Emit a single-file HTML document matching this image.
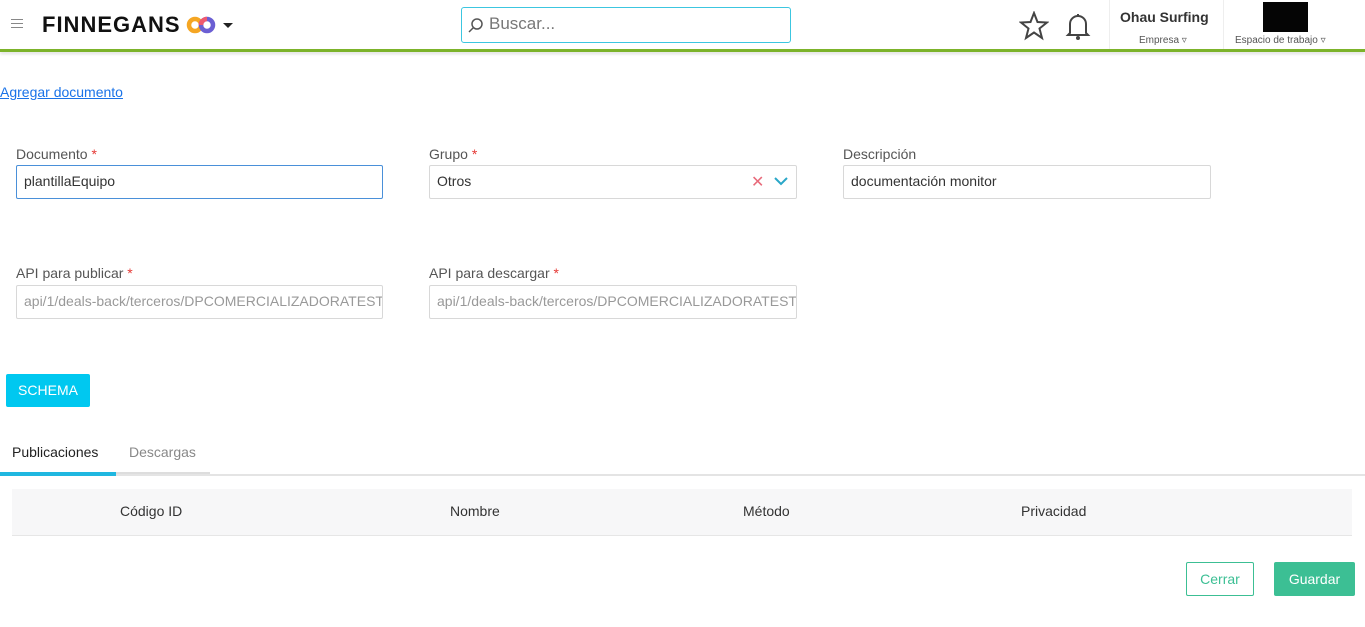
<!DOCTYPE html>
<html><head><meta charset="utf-8"><style>
*{box-sizing:border-box;margin:0;padding:0}
body{width:1365px;height:627px;background:#fff;font-family:"Liberation Sans",sans-serif;position:relative;overflow:hidden;color:#333}
.a{position:absolute}
.lbl{font-size:14px;color:#555}
.lbl b{color:#e53935;font-weight:normal}
.inp{height:34px;border:1px solid #d8d8d8;border-radius:2px;font-size:14px;padding:7px 7px;white-space:nowrap;overflow:hidden;color:#333}
.th{font-size:14px;color:#333;top:503px}
</style></head><body>
<div class="a" style="left:0;top:49px;width:1365px;height:3px;background:#7cb32a;box-shadow:0 2px 3px #ddd"></div>
<div class="a" style="left:11px;top:19px;width:12px;height:1px;background:#888;box-shadow:0 4px 0 #888,0 8px 0 #888"></div>
<div class="a" style="left:42px;top:12px;font-size:22px;font-weight:bold;color:#111;letter-spacing:1px">FINNEGANS</div>
<svg class="a" style="left:186px;top:14px" width="30" height="22"><circle cx="9" cy="11" r="6" fill="none" stroke="#f5a623" stroke-width="4.5"/><circle cx="21" cy="11" r="6" fill="none" stroke="#6b5fd3" stroke-width="4.5"/><path d="M21 5 A6 6 0 0 0 15 11" stroke="#ef5a6f" stroke-width="4.5" fill="none"/></svg>
<div class="a" style="left:223px;top:23px;border:5px solid transparent;border-top:5px solid #222"></div>
<div class="a" style="left:461px;top:7px;width:330px;height:36px;border:1px solid #3cc6e0;border-radius:3px;font-size:17px;color:#777;padding:6px 0 0 27px">Buscar...</div>
<svg class="a" style="left:468px;top:17px" width="16" height="16"><circle cx="9" cy="7" r="5" fill="none" stroke="#555" stroke-width="1.5"/><path d="M5 11 L1 15" stroke="#555" stroke-width="1.5"/></svg>
<svg class="a" style="left:1019px;top:11px" width="30" height="30"><path d="M15 2 L18.5 11 L28 11.5 L20.5 17.5 L23 27 L15 21.5 L7 27 L9.5 17.5 L2 11.5 L11.5 11 Z" fill="none" stroke="#444" stroke-width="2"/></svg>
<svg class="a" style="left:1065px;top:11px" width="26" height="30"><path d="M5 22 L5 13 A8 8 0 0 1 21 13 L21 22 L23 24 L3 24 Z M13 3 L13 5" fill="none" stroke="#444" stroke-width="2"/><circle cx="13" cy="27" r="2" fill="#444"/></svg>
<div class="a" style="left:1109px;top:0;width:1px;height:49px;background:#eee"></div>
<div class="a" style="left:1223px;top:0;width:1px;height:49px;background:#eee"></div>
<div class="a" style="left:1120px;top:9px;font-size:14px;font-weight:bold;color:#333">Ohau Surfing</div>
<div class="a" style="left:1139px;top:35px;font-size:10px;color:#555">Empresa ▿</div>
<div class="a" style="left:1263px;top:2px;width:45px;height:30px;background:#050505"></div>
<div class="a" style="left:1235px;top:35px;font-size:10px;color:#555">Espacio de trabajo ▿</div>
<div class="a" style="left:0;top:84px;font-size:14px;color:#1a73e8;text-decoration:underline">Agregar documento</div>
<div class="a lbl" style="left:16px;top:146px">Documento <b>*</b></div>
<div class="a inp" style="left:16px;top:165px;width:367px;border-color:#4a90d9">plantillaEquipo</div>
<div class="a lbl" style="left:429px;top:146px">Grupo <b>*</b></div>
<div class="a inp" style="left:429px;top:165px;width:368px">Otros</div>
<div class="a" style="left:751px;top:172px;font-size:16px;color:#e86a7a">✕</div>
<svg class="a" style="left:774px;top:176px" width="14" height="10"><path d="M1 2 L7 8 L13 2" fill="none" stroke="#2aa7c8" stroke-width="2"/></svg>
<div class="a lbl" style="left:843px;top:146px">Descripción</div>
<div class="a inp" style="left:843px;top:165px;width:368px">documentación monitor</div>
<div class="a lbl" style="left:16px;top:265px">API para publicar <b>*</b></div>
<div class="a inp" style="left:16px;top:285px;width:367px;color:#999">api/1/deals-back/terceros/DPCOMERCIALIZADORATEST</div>
<div class="a lbl" style="left:429px;top:265px">API para descargar <b>*</b></div>
<div class="a inp" style="left:429px;top:285px;width:368px;color:#999">api/1/deals-back/terceros/DPCOMERCIALIZADORATEST</div>
<div class="a" style="left:6px;top:374px;width:84px;height:33px;background:#00c8f0;border-radius:2px;color:#fff;font-size:14px;text-align:center;line-height:33px">SCHEMA</div>
<div class="a" style="left:12px;top:444px;font-size:14px;color:#222">Publicaciones</div>
<div class="a" style="left:129px;top:444px;font-size:14px;color:#888">Descargas</div>
<div class="a" style="left:0;top:474px;width:1365px;height:2px;background:#e4e4e4"></div>
<div class="a" style="left:0;top:472px;width:116px;height:4px;background:#1fb7e0"></div>
<div class="a" style="left:116px;top:472px;width:94px;height:2px;background:#ddd"></div>
<div class="a" style="left:12px;top:489px;width:1340px;height:47px;background:#f7f7f8;border-bottom:1px solid #e6e6e6"></div>
<div class="a th" style="left:120px">Código ID</div>
<div class="a th" style="left:450px">Nombre</div>
<div class="a th" style="left:743px">Método</div>
<div class="a th" style="left:1021px">Privacidad</div>
<div class="a" style="left:1186px;top:562px;width:68px;height:34px;border:1px solid #3cbf94;border-radius:2px;color:#3cbf94;font-size:14px;text-align:center;line-height:32px">Cerrar</div>
<div class="a" style="left:1274px;top:562px;width:81px;height:34px;background:#3cbf94;border-radius:2px;color:#fff;font-size:14px;text-align:center;line-height:34px">Guardar</div>
</body></html>
